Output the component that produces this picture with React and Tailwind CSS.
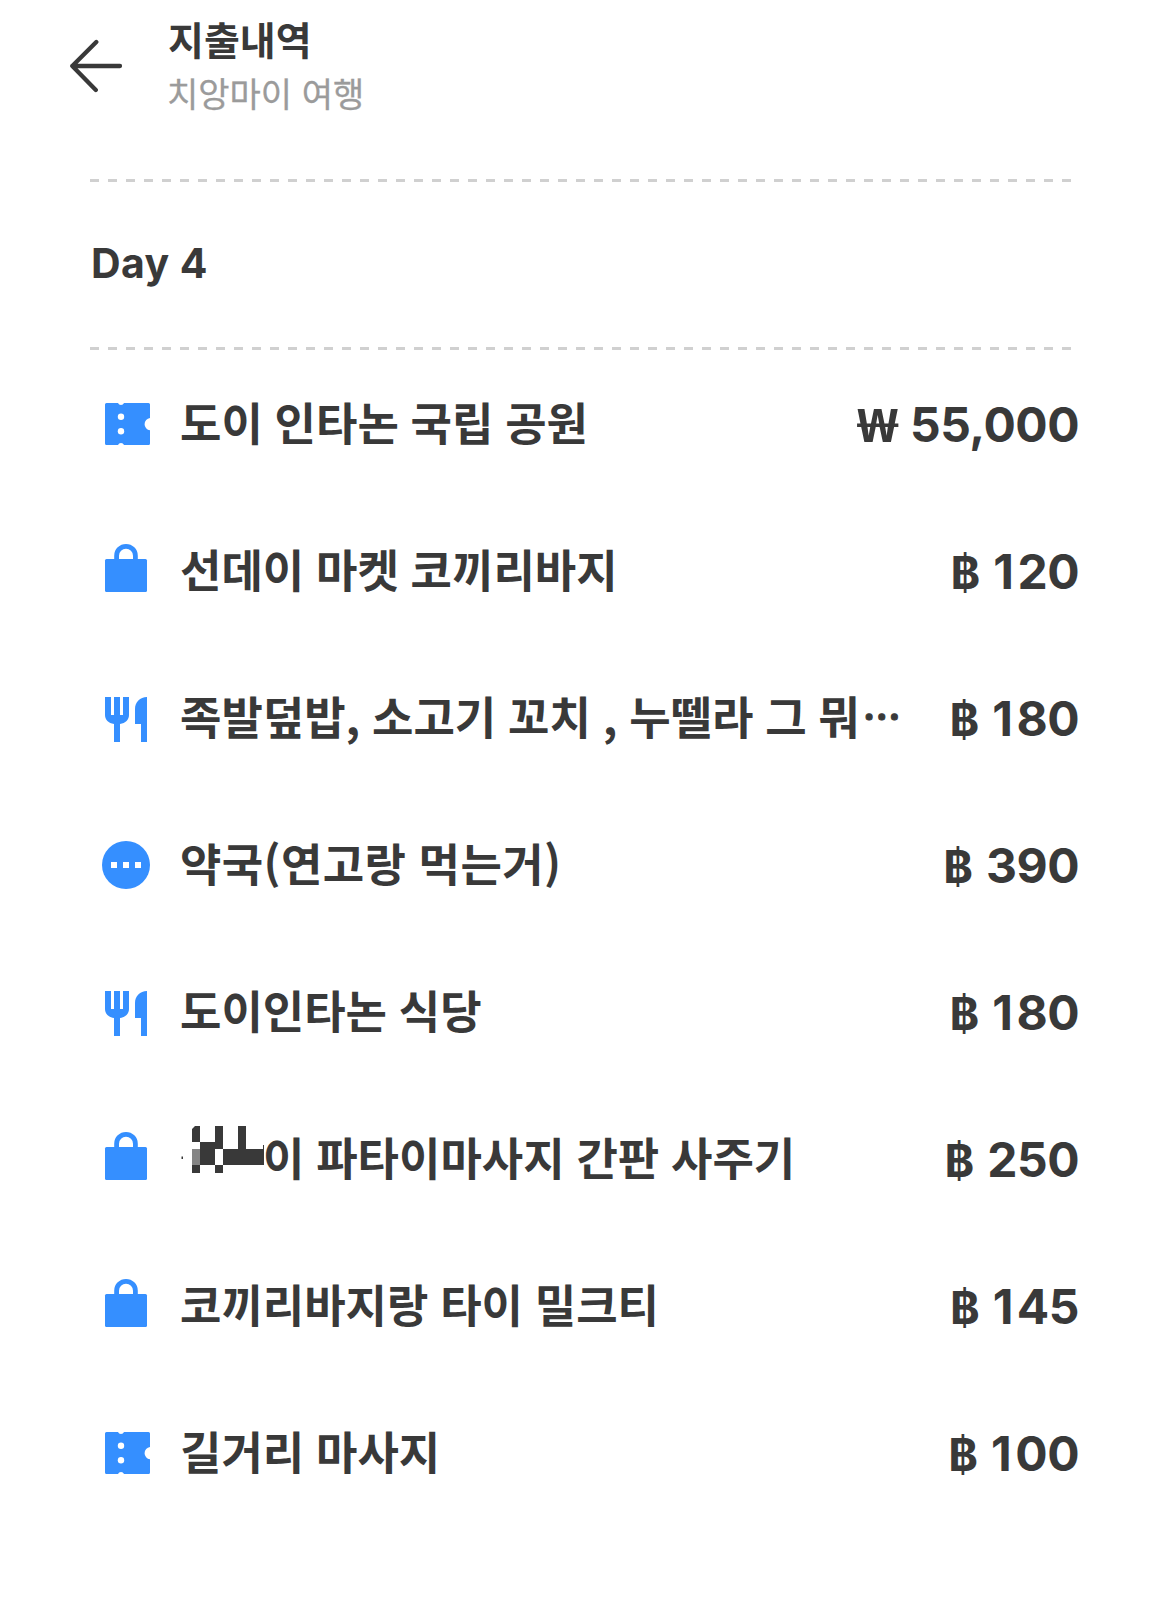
import React from 'react';
import clsx from 'clsx';

const TicketIcon = () => (
  <svg viewBox="0 0 60 60" className="w-15 h-15 shrink-0" aria-hidden="true">
    <path
      fill="#358fff"
      d="M10.5 9H22a3.2 3.2 0 0 0 6 0H52.5a1.5 1.5 0 0 1 1.500 1.500V24a6.200 6.200 0 0 0 0 12.300V49.500a1.500 1.500 0 0 1-1.500 1.500H28a3.200 3.200 0 0 0-6 0H10.500a1.500 1.500 0 0 1-1.500-1.500V10.500a1.500 1.500 0 0 1 1.500-1.500Z"
    />
    <circle cx="25" cy="22.700" r="3.200" fill="#fff" />
    <circle cx="25" cy="37.300" r="3.200" fill="#fff" />
  </svg>
);

const BagIcon = () => (
  <svg viewBox="0 0 60 60" className="w-15 h-15 shrink-0" aria-hidden="true">
    <path d="M20.600 20V14.700a9.400 9.400 0 0 1 18.800 0V20" fill="none" stroke="#358fff" strokeWidth="4.800" />
    <rect x="9" y="18" width="42" height="33" rx="1.500" fill="#358fff" />
  </svg>
);

const FoodIcon = () => (
  <svg viewBox="0 0 60 60" className="w-15 h-15 shrink-0" fill="#358fff" aria-hidden="true">
    <path d="M9 9h6v18h3V9h6v18h3V9h6v18c0 4.500-3.500 8.300-9 9v18h-6V36c-5.500-.7-9-4.500-9-9Z" />
    <path d="M51 9v45h-6V36h-6V21c0-7 5-12 12-12Z" />
  </svg>
);

const EtcIcon = () => (
  <svg viewBox="0 0 60 60" className="w-15 h-15 shrink-0" aria-hidden="true">
    <circle cx="30" cy="30" r="24" fill="#358fff" />
    <path d="M15 27h6v6h-6ZM27 27h6v6h-6ZM39 27h6v6h-6Z" fill="#fff" />
  </svg>
);

// Pixel blocks that cover the hidden part of a name
const Mosaic = () => (
  <svg viewBox="0 0 84 60" className="w-[84px] h-15 mb-1.5 shrink-0" fill="#393939" aria-hidden="true">
    <path d="M12 3 15 0h5v16h-8ZM20 16h15v23H20ZM35 0h8v23h-8ZM58 0h8v23h-8ZM43 23h41v16H43ZM83 19h1v4h-1Z" />
    <path d="M12 39h8v8h-8ZM35 39h8v8h-8Z" />
    <path d="M12 23h8v16h-8Z" fill="#858585" />
    <path d="M1.500 30.500h1.500v2.500h-1.500Z" />
  </svg>
);

const icons = { ticket: TicketIcon, bag: BagIcon, food: FoodIcon, etc: EtcIcon };

const expenses = [
  { icon: 'ticket', name: '도이 인타논 국립 공원', currency: '₩', amount: '55,000' },
  { icon: 'bag', name: '선데이 마켓 코끼리바지', currency: '฿', amount: '120' },
  { icon: 'food', name: '족발덮밥, 소고기 꼬치 , 누뗄라 그 뭐', cut: true, currency: '฿', amount: '180' },
  { icon: 'etc', name: '약국(연고랑 먹는거)', currency: '฿', amount: '390' },
  { icon: 'food', name: '도이인타논 식당', currency: '฿', amount: '180' },
  { icon: 'bag', name: '이 파타이마사지 간판 사주기', hidden: true, currency: '฿', amount: '250' },
  { icon: 'bag', name: '코끼리바지랑 타이 밀크티', currency: '฿', amount: '145' },
  { icon: 'ticket', name: '길거리 마사지', currency: '฿', amount: '100' },
];

const Divider = () => (
  <div className="ml-[90px] w-[981px] h-[3px] bg-[repeating-linear-gradient(90deg,#d0d0d0_0_9px,transparent_9px_18px)]" />
);

const Header = () => (
  <header className="flex h-[179px] pl-[70px]">
    <button className="mt-[39px] w-[53px] h-[54px]" aria-label="뒤로">
      <svg viewBox="0 0 53 54" className="w-[53px] h-[54px]" fill="none" stroke="#393939" strokeWidth="4.300" strokeLinecap="round" strokeLinejoin="round">
        <path d="M26.300 3 2.300 27l23.500 24M2.300 27H50" />
      </svg>
    </button>
    <div className="ml-[45px] pt-[13px]">
      <h1 className="text-[39px] leading-[50px] font-bold">지출내역</h1>
      <p className="-ml-px mt-[3px] text-[34px] leading-[54px] text-[#9b9b9b] [-webkit-text-stroke:0.3px]">치앙마이 여행</p>
    </div>
  </header>
);

const ExpenseRow = ({ icon, name, hidden, cut, currency, amount }) => {
  const Icon = icons[icon];
  return (
    <li className="flex items-center h-[147px] pl-24 pr-[91px]">
      <Icon />
      {hidden && <div className="ml-6 -mr-[25px]"><Mosaic /></div>}
      <span
        className={clsx(
          'ml-6 pb-[5px] text-[45px] leading-none font-bold whitespace-nowrap [word-spacing:-0.8px]',
          name.includes('(') && 'tracking-[0.4px]'
        )}
      >
        {name}
        {cut && <span className="ml-[3px] text-[38px] leading-none align-[4px] [-webkit-text-stroke:1px]">⋯</span>}
      </span>
      <span className="ml-auto pt-0.5 flex items-baseline gap-[13px] font-['Inter',sans-serif] text-[48px] leading-none whitespace-nowrap">
        {currency === '₩' ? (
          <span className="-mr-0.5 font-['Noto_Sans',sans-serif] text-[46px] leading-none font-bold origin-right scale-x-125">₩</span>
        ) : (
          <span className="text-[45px] leading-none font-bold">{currency}</span>
        )}
        <span className={clsx('block font-[650] tracking-[-0.5px]', amount.startsWith('1') && 'first-letter:tracking-[3.5px]')}>
          {amount}
        </span>
      </span>
    </li>
  );
};

export default function App() {
  return (
    <div lang="ko" className="w-[1170px] h-[1611px] overflow-hidden bg-white text-[#393939] font-['Noto_Sans_CJK_KR',sans-serif]">
      <Header />
      <Divider />
      <h2 className="flex items-center h-[165px] pl-[91px] pb-px font-['Inter',sans-serif] text-[41px] font-bold tracking-[0.4px]">Day 4</h2>
      <Divider />
      <ul>
        {expenses.map((item, i) => (
          <ExpenseRow key={i} {...item} />
        ))}
      </ul>
    </div>
  );
}
